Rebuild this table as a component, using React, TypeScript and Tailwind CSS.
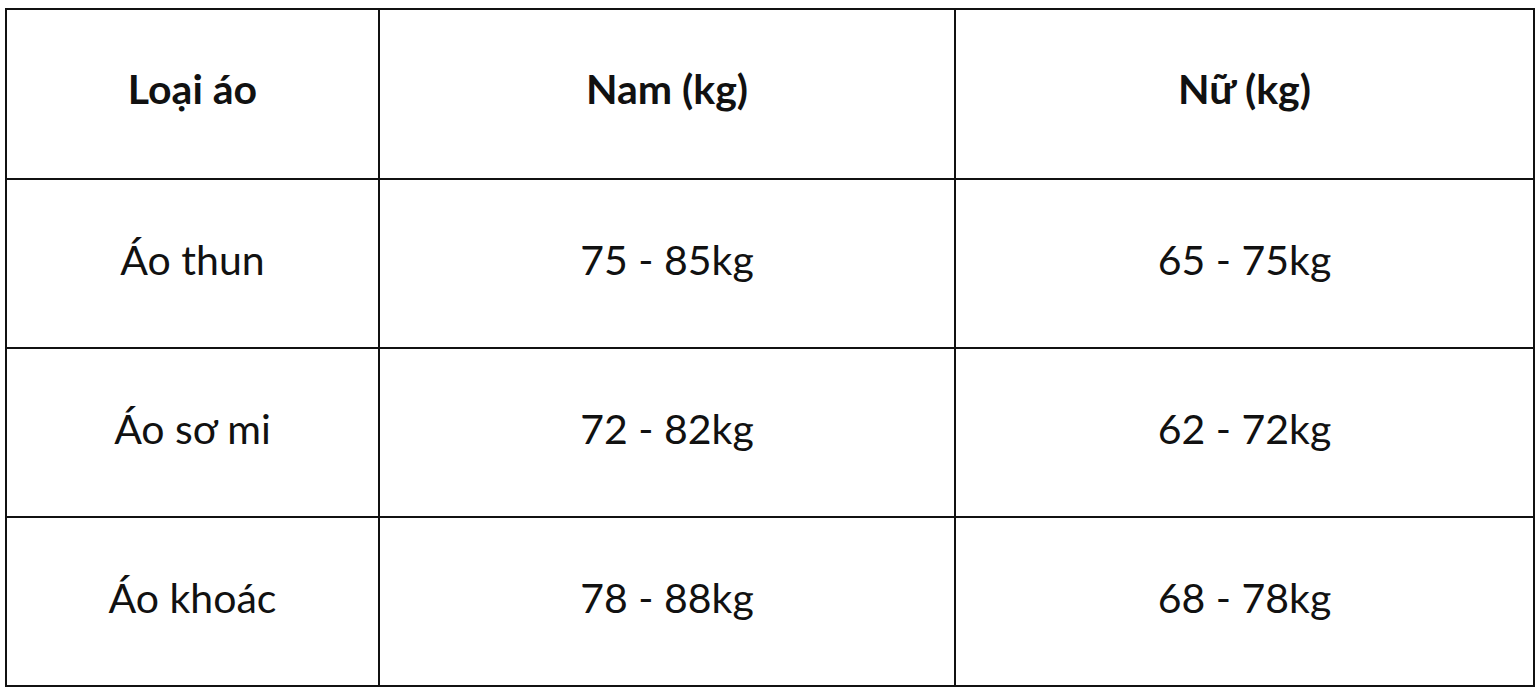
const rows = [
  { type: "Áo thun", male: "75 - 85kg", female: "65 - 75kg" },
  { type: "Áo sơ mi", male: "72 - 82kg", female: "62 - 72kg" },
  { type: "Áo khoác", male: "78 - 88kg", female: "68 - 78kg" },
];

export default function App() {
  return (
    <div className="min-h-screen bg-white pl-[5px] pt-[8px] font-['Lato','Noto_Sans',sans-serif] text-[#111]">
      <table className="w-[1528px] h-[678px] border-collapse table-fixed text-[41px]">
        <colgroup>
          <col className="w-[373px]" />
          <col className="w-[576px]" />
          <col className="w-[579px]" />
        </colgroup>
        <thead>
          <tr className="h-[170px]">
            <th className="border-2 border-[#111] pb-[10px] font-bold text-center">Loại áo</th>
            <th className="border-2 border-[#111] pb-[10px] font-bold text-center">Nam (kg)</th>
            <th className="border-2 border-[#111] pb-[10px] font-bold text-center">Nữ (kg)</th>
          </tr>
        </thead>
        <tbody>
          {rows.map((r) => (
            <tr key={r.type} className="h-[169px]">
              <td className="border-2 border-[#111] pb-[8px] text-center">{r.type}</td>
              <td className="border-2 border-[#111] pb-[8px] text-center">{r.male}</td>
              <td className="border-2 border-[#111] pb-[8px] text-center">{r.female}</td>
            </tr>
          ))}
        </tbody>
      </table>
    </div>
  );
}
